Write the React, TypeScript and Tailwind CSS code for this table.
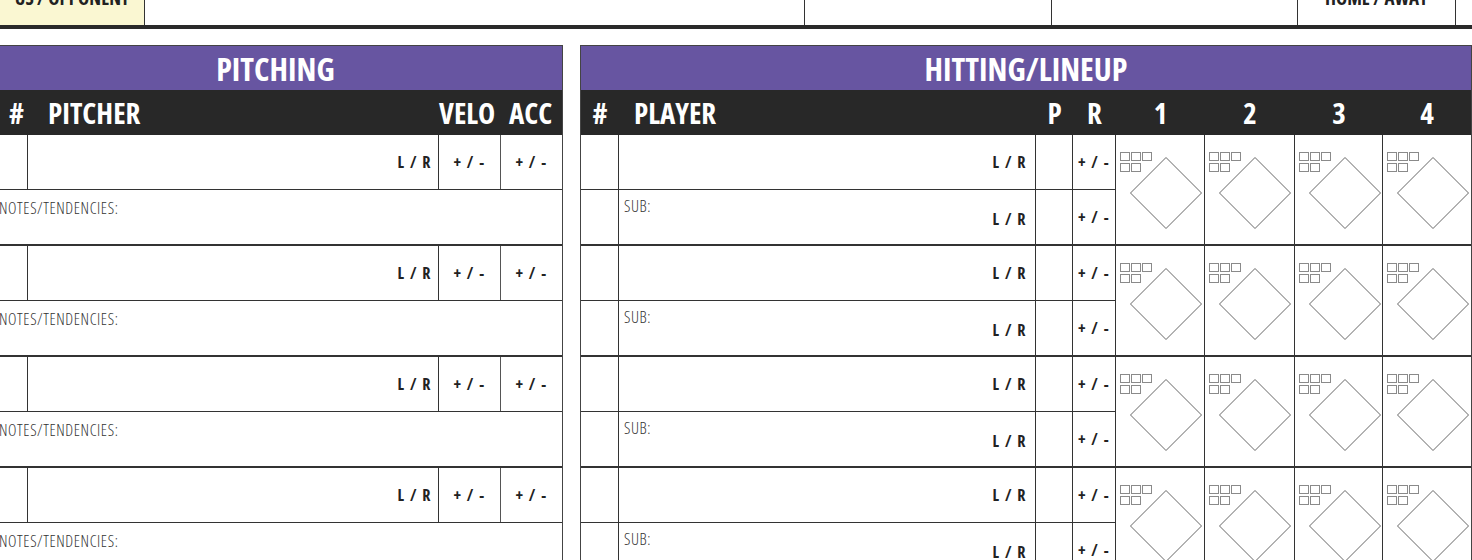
import React from 'react';

const COND = "font-['Open_Sans',sans-serif] [font-stretch:75%]";

const Diamond = () => (
  <div className="relative h-full w-full">
    {/* count boxes */}
    <div className="absolute left-[4px] top-[17px] flex flex-col gap-[2px]">
      <div className="flex gap-[1px]">
        <span className="block h-[9px] w-[10px] border border-[#8a8a8a]" />
        <span className="block h-[9px] w-[10px] border border-[#8a8a8a]" />
        <span className="block h-[9px] w-[10px] border border-[#8a8a8a]" />
      </div>
      <div className="flex gap-[1px]">
        <span className="block h-[9px] w-[10px] border border-[#8a8a8a]" />
        <span className="block h-[9px] w-[10px] border border-[#8a8a8a]" />
      </div>
    </div>
    <svg className="absolute left-[14px] top-[22px]" width="72" height="72" viewBox="0 0 72 72">
      <path d="M36 0.5 L71.5 36 L36 71.5 L0.5 36 Z" fill="none" stroke="#666" strokeWidth="1" />
    </svg>
  </div>
);

const LR = () => <span className={`${COND} text-[16px] font-bold tracking-[1.5px] text-[#222]`}>L / R</span>;
const PM = () => <span className={`${COND} text-[16px] font-bold tracking-[1.5px] text-[#222]`}>+ / -</span>;

const PitchingBlock = ({ last }: { last?: boolean }) => (
  <div className={`flex flex-col ${last ? '' : 'border-b-2 border-[#333]'}`}>
    <div className="flex h-[55px] border-b border-[#333]">
      <div className="w-[39px] shrink-0 border-r border-[#333]" />
      <div className="flex w-[411px] shrink-0 items-center justify-end border-r border-[#333] pr-[6px]">
        <LR />
      </div>
      <div className="flex w-[62px] shrink-0 items-center justify-center border-r border-[#555]">
        <PM />
      </div>
      <div className="flex flex-1 items-center justify-center">
        <PM />
      </div>
    </div>
    <div className="h-[54px] pl-[10px] pt-[6px]">
      <span className={`${COND} text-[16px] font-light tracking-[0.6px] text-[#333]`}>NOTES/TENDENCIES:</span>
    </div>
  </div>
);

const HittingBlock = ({ last }: { last?: boolean }) => (
  <div className={`flex ${last ? '' : 'border-b-2 border-[#333]'}`}>
    <div className="flex w-[535px] shrink-0 flex-col border-r border-[#333]">
      <div className="flex h-[55px] border-b border-[#333]">
        <div className="w-[38px] shrink-0 border-r border-[#333]" />
        <div className="flex w-[417px] shrink-0 items-center justify-end border-r border-[#333] pr-[8px]">
          <LR />
        </div>
        <div className="w-[37px] shrink-0 border-r border-[#333]" />
        <div className="flex flex-1 items-center justify-center">
          <PM />
        </div>
      </div>
      <div className="flex h-[54px]">
        <div className="w-[38px] shrink-0 border-r border-[#333]" />
        <div className="relative flex w-[417px] shrink-0 items-center justify-end border-r border-[#333] pr-[8px] pt-[3px]">
          <span className={`${COND} absolute left-[5px] top-[4px] text-[16px] font-light tracking-[0.6px] text-[#333]`}>SUB:</span>
          <LR />
        </div>
        <div className="w-[37px] shrink-0 border-r border-[#333]" />
        <div className="flex flex-1 items-center justify-center">
          <PM />
        </div>
      </div>
    </div>
    {[89, 90, 88, 88].map((w, i) => (
      <div key={i} className={`shrink-0 ${i < 3 ? 'border-r border-[#333]' : ''}`} style={{ width: w }}>
        <Diamond />
      </div>
    ))}
  </div>
);

export default function App() {
  return (
    <div className="h-[560px] w-[1472px] overflow-hidden bg-white">
      {/* top info bar, cut off at the top */}
      <div className="-mt-[24px] flex h-[53px] border-b-4 border-[#2a2a2a]">
        <div className="flex w-[145px] shrink-0 items-center justify-center border-r border-[#333] bg-[#faf7d2]">
          <span className={`${COND} pb-[4px] text-[19px] font-bold text-[#222]`}>US / OPPONENT</span>
        </div>
        <div className="w-[660px] shrink-0 border-r border-[#333]" />
        <div className="w-[247px] shrink-0 border-r border-[#333]" />
        <div className="w-[246px] shrink-0 border-r border-[#333]" />
        <div className="flex w-[158px] shrink-0 items-center justify-center border-r border-[#333]">
          <span className={`${COND} pb-[4px] text-[19px] font-bold text-[#222]`}>HOME / AWAY</span>
        </div>
        <div className="flex-1" />
      </div>

      <div className="mt-[16px] flex gap-[17px]">
        {/* pitching */}
        <div className="-ml-[12px] w-[575px] shrink-0 border border-[#444]">
          <div className="flex h-[44px] items-center justify-center bg-[#6755a1]">
            <span className={`${COND} pt-[1px] text-[32px] font-bold text-white`}>PITCHING</span>
          </div>
          <div className="flex h-[45px] items-center bg-[#282828] text-white">
            <span className={`${COND} w-[49px] pl-[20px] text-[29px] font-bold`}>#</span>
            <span className={`${COND} flex-1 pl-[10px] text-[29px] font-bold`}>PITCHER</span>
            <span className={`${COND} w-[70px] text-[29px] font-bold`}>VELO</span>
            <span className={`${COND} w-[53px] text-[29px] font-bold`}>ACC</span>
          </div>
          <PitchingBlock />
          <PitchingBlock />
          <PitchingBlock />
          <PitchingBlock last />
        </div>

        {/* hitting */}
        <div className="w-[892px] shrink-0 border border-[#444]">
          <div className="flex h-[44px] items-center justify-center bg-[#6755a1]">
            <span className={`${COND} pt-[1px] text-[32px] font-bold text-white`}>HITTING/LINEUP</span>
          </div>
          <div className="flex h-[45px] items-center bg-[#282828] text-white">
            <span className={`${COND} w-[38px] text-center text-[29px] font-bold`}>#</span>
            <span className={`${COND} w-[417px] pl-[15px] text-[29px] font-bold`}>PLAYER</span>
            <span className={`${COND} w-[37px] text-center text-[29px] font-bold`}>P</span>
            <span className={`${COND} w-[43px] text-center text-[29px] font-bold`}>R</span>
            <span className={`${COND} w-[89px] text-center text-[29px] font-bold`}>1</span>
            <span className={`${COND} w-[90px] text-center text-[29px] font-bold`}>2</span>
            <span className={`${COND} w-[88px] text-center text-[29px] font-bold`}>3</span>
            <span className={`${COND} w-[88px] text-center text-[29px] font-bold`}>4</span>
          </div>
          <HittingBlock />
          <HittingBlock />
          <HittingBlock />
          <HittingBlock last />
        </div>
      </div>
    </div>
  );
}
